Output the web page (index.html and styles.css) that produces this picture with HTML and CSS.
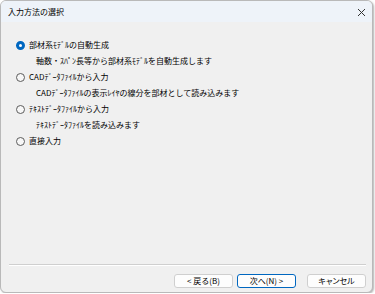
FILE: index.html
```html
<!DOCTYPE html>
<html lang="ja">
<head>
  <meta charset="UTF-8">
  <title>入力方法の選択</title>
  <link rel="stylesheet" href="styles.css">
</head>
<body>
  <div class="window">
    <div class="titlebar">
      <span class="title">入力方法の選択</span>
      <svg class="close" width="9" height="9" viewBox="0 0 9 9">
        <path d="M1 1 L8 8 M8 1 L1 8" stroke="#333" stroke-width="1" fill="none"/>
      </svg>
    </div>

    <div class="options">
      <label class="option"><input type="radio" name="mode" checked>部材系ﾓﾃﾞﾙの自動生成</label>
      <p class="desc">軸数・ｽﾊﾟﾝ長等から部材系ﾓﾃﾞﾙを自動生成します</p>
      <label class="option"><input type="radio" name="mode">CADﾃﾞｰﾀﾌｧｲﾙから入力</label>
      <p class="desc">CADﾃﾞｰﾀﾌｧｲﾙの表示ﾚｲﾔの線分を部材として読み込みます</p>
      <label class="option"><input type="radio" name="mode">ﾃｷｽﾄﾃﾞｰﾀﾌｧｲﾙから入力</label>
      <p class="desc">ﾃｷｽﾄﾃﾞｰﾀﾌｧｲﾙを読み込みます</p>
      <label class="option"><input type="radio" name="mode">直接入力</label>
    </div>

    <div class="footer">
      <div class="separator"></div>
      <div class="buttons">
        <button>&lt; 戻る(B)</button>
        <button class="default">次へ(N) &gt;</button>
        <button class="cancel">キャンセル</button>
      </div>
    </div>
  </div>
</body>
</html>
```

FILE: styles.css
```css
/* Reset */
* {
  margin: 0;
  padding: 0;
  box-sizing: border-box;
}

body {
  font-family: "Noto Sans CJK JP", "Noto Sans", sans-serif;
  font-size: 8px;
  color: #000;
  background-color: #fff;
}

.window {
  width: 373px;
  height: 293px;
  display: flex;
  flex-direction: column;
  background-color: #f0f0f0;
  border: 1px solid #b9b9b9;
  border-radius: 6px;
  overflow: hidden;
  box-shadow: 1px 1px 2px rgba(0, 0, 0, 0.3);
}

/* Title bar */
.titlebar {
  height: 21px;
  display: flex;
  align-items: center;
  justify-content: space-between;
  padding: 0 6px 0 7px;
  background-color: #eef3f9;
}

.close {
  margin-top: 1px;
}

/* Choices */
.options {
  flex: 1;
  padding: 15px 0 0 15px;
  line-height: 16px;
}

.option {
  display: flex;
  align-items: center;
}

.option input {
  appearance: none;
  width: 9px;
  height: 9px;
  margin-right: 4px;
  border: 1px solid #5c5c5c;
  border-radius: 50%;
  background-color: #f7f7f7;
}

.option input:checked {
  border: 3px solid #0067c0;
  background-color: #fff;
}

.desc {
  padding-left: 20px;
}

/* Footer */
.footer {
  padding: 0 6px 4px 8px;
}

.separator {
  border-top: 1px solid #cfcfcf;
  border-bottom: 1px solid #fff;
  margin-bottom: 8px;
}

.buttons {
  display: flex;
  justify-content: flex-end;
}

button {
  width: 59px;
  height: 14px;
  margin-left: 4px;
  font-family: inherit;
  font-size: 8px;
  line-height: 12px;
  color: #000;
  background-color: #fdfdfd;
  border: 1px solid #cfcfcf;
  border-radius: 3px;
}

button.default {
  border-color: #0067c0;
}

button.cancel {
  margin-left: 11px;
  font-feature-settings: "palt";
}
```
